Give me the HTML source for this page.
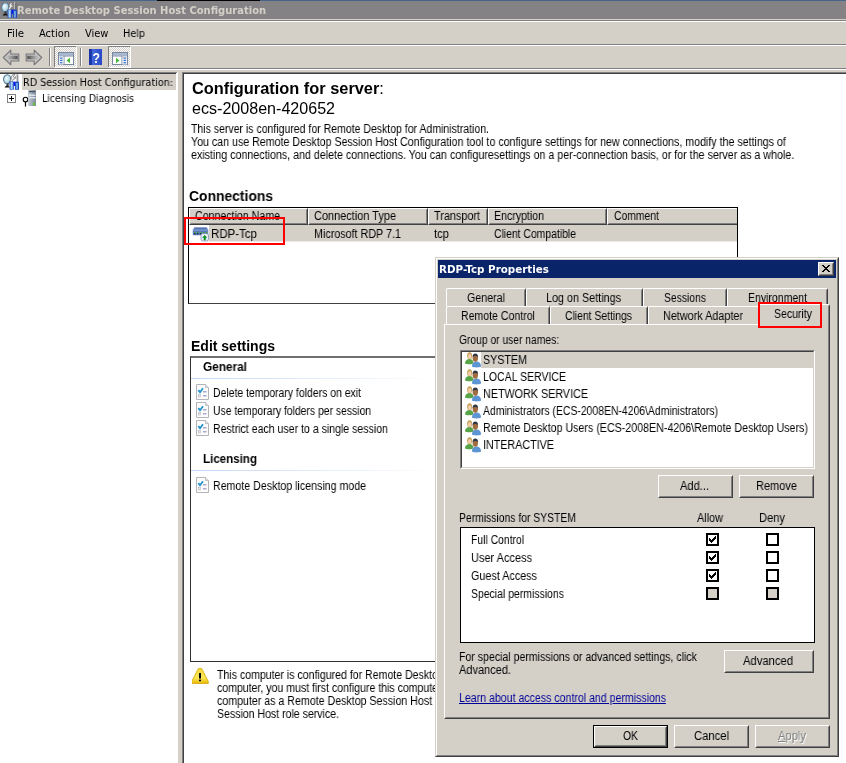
<!DOCTYPE html>
<html><head><meta charset="utf-8"><title>Remote Desktop Session Host Configuration</title>
<style>
html,body{margin:0;padding:0;}
body{width:846px;height:763px;overflow:hidden;background:#d4d0c8;position:relative;font-family:"Liberation Sans",sans-serif;font-size:11px;color:#000;}
.a{position:absolute;}
.t{position:absolute;white-space:nowrap;line-height:13px;font-size:12px;transform-origin:0 0;will-change:transform;}
.th{font-family:"DejaVu Sans Condensed","DejaVu Sans","Liberation Sans",sans-serif;font-size:11px;}
.b{font-weight:bold;}
.h13{font-size:14px;line-height:15px;font-weight:bold;}
.h16{font-size:16px;line-height:18px;}
.btn{position:absolute;box-sizing:border-box;border:1px solid;border-color:#fff #404040 #404040 #fff;background:#d4d0c8;}
.btn>i{position:absolute;left:0;top:0;right:0;bottom:0;border:1px solid;border-color:#d4d0c8 #808080 #808080 #d4d0c8;display:block;}
.sunk{position:absolute;box-sizing:border-box;border:1px solid;border-color:#808080 #fff #fff #808080;background:#fff;}
.sunk>i{position:absolute;left:0;top:0;right:0;bottom:0;border:1px solid;border-color:#404040 #d4d0c8 #d4d0c8 #404040;display:block;}
.hd{position:absolute;box-sizing:border-box;top:208px;height:17px;background:#d4d0c8;border:1px solid;border-color:#fff #404040 #404040 #fff;}
.hd>i{position:absolute;left:0;top:0;right:0;bottom:0;border:1px solid;border-color:#d4d0c8 #808080 #808080 #d4d0c8;display:block;}
.tab{position:absolute;box-sizing:border-box;height:18px;background:#d4d0c8;border-top:1px solid #fff;border-left:1px solid #fff;border-right:1px solid #404040;border-radius:2px 2px 0 0;}
.tab>i{position:absolute;right:0;top:1px;bottom:0;width:1px;background:#808080;display:block;}
.cb{position:absolute;box-sizing:border-box;width:13px;height:13px;border:2px solid #000;background:#fff;}
.cb.d{background:#d4d0c8;}
.red{position:absolute;box-sizing:border-box;border:2px solid #ff0000;}
</style></head><body>
<!-- main window title -->
<div class="a" style="left:0;top:0;width:846px;height:1px;background:#46658a"></div>
<div class="a" style="left:157px;top:0;width:103px;height:1px;background:#000"></div>
<div class="a" style="left:0;top:1px;width:846px;height:18px;background:#848284"></div>
<div class="a" style="left:0;top:20px;width:846px;height:1px;background:#808080"></div>
<div class="a" style="left:0;top:21px;width:846px;height:1px;background:#fff"></div>
<!-- menu / toolbar dividers -->
<div class="a" style="left:0;top:44px;width:846px;height:1px;background:#808080"></div>
<div class="a" style="left:0;top:45px;width:846px;height:1px;background:#fff"></div>
<div class="a" style="left:0;top:68px;width:846px;height:1px;background:#808080"></div>
<div class="a" style="left:0;top:69px;width:846px;height:1px;background:#fff"></div>
<!-- left tree -->
<div class="a" style="left:0;top:72px;width:177px;height:691px;background:#fff"></div>
<div class="a" style="left:0;top:72px;width:177px;height:1px;background:#808080"></div>
<div class="a" style="left:0;top:73px;width:176px;height:1px;background:#404040"></div>
<div class="a" style="left:177px;top:72px;width:1px;height:691px;background:#fff"></div>
<div class="a" style="left:22px;top:74px;width:154px;height:16px;background:#d4d0c8"></div>
<!-- right pane -->
<div class="a" style="left:182px;top:72px;width:664px;height:691px;background:#fff"></div>
<div class="a" style="left:182px;top:72px;width:664px;height:1px;background:#808080"></div>
<div class="a" style="left:182px;top:72px;width:1px;height:691px;background:#808080"></div>
<div class="a" style="left:183px;top:73px;width:663px;height:1px;background:#404040"></div>
<div class="a" style="left:183px;top:73px;width:1px;height:690px;background:#404040"></div>
<!-- connections list -->
<div class="a" style="left:188px;top:207px;width:550px;height:97px;background:#fff;box-sizing:border-box;border:1px solid #000;border-bottom-color:#404040"></div>
<div class="hd" style="left:189px;width:119px"><i></i></div>
<div class="hd" style="left:308px;width:120px"><i></i></div>
<div class="hd" style="left:428px;width:60px"><i></i></div>
<div class="hd" style="left:488px;width:119px"><i></i></div>
<div class="hd" style="left:607px;width:130px;border-right:0"><i style="border-right:0"></i></div>
<div class="a" style="left:209px;top:225px;width:528px;height:16px;background:#d4d0c8"></div>
<div class="a" style="left:209px;top:241px;width:528px;height:1px;background:#ebe9e5"></div>
<!-- edit settings box -->
<div class="a" style="left:190px;top:356px;width:600px;height:306px;box-sizing:border-box;border:1px solid #303030;border-top:2px solid #707070;background:#fff"></div>
<div class="a" style="left:191px;top:378px;width:246px;height:1px;background:linear-gradient(to right,#c3d7f6,#fff)"></div>
<div class="a" style="left:191px;top:470px;width:246px;height:1px;background:linear-gradient(to right,#c3d7f6,#fff)"></div>

<!-- icons: main window -->
<svg class="a" style="left:0;top:0" width="0" height="0"><defs>
<linearGradient id="gh" x1="0" x2="1" y1="0" y2="0"><stop offset="0" stop-color="#1038b8"/><stop offset=".35" stop-color="#b8dcf4"/><stop offset=".6" stop-color="#78b0e4"/><stop offset="1" stop-color="#1840c0"/></linearGradient>
<radialGradient id="gg" cx=".4" cy=".4" r=".7"><stop offset="0" stop-color="#f4fcff"/><stop offset=".6" stop-color="#b8dce8"/><stop offset="1" stop-color="#6890a8"/></radialGradient>
<linearGradient id="ga" x1="0" x2="1" y1="0" y2="0"><stop offset="0" stop-color="#c2c2c2"/><stop offset=".5" stop-color="#8c8c8c"/><stop offset="1" stop-color="#505050"/></linearGradient>
<linearGradient id="gb" x1="1" x2="0" y1="0" y2="0"><stop offset="0" stop-color="#c2c2c2"/><stop offset=".5" stop-color="#8c8c8c"/><stop offset="1" stop-color="#505050"/></linearGradient>
<linearGradient id="gs" x1="0" x2="1" y1="0" y2="0"><stop offset="0" stop-color="#c4ccd4"/><stop offset="1" stop-color="#7c8894"/></linearGradient>
<linearGradient id="gq" x1="0" x2="1" y1="0" y2="0"><stop offset="0" stop-color="#1830a0"/><stop offset=".22" stop-color="#1c3cb0"/><stop offset=".25" stop-color="#4468d8"/><stop offset="1" stop-color="#2848c8"/></linearGradient>
<linearGradient id="gw" x1="0" x2="0" y1="0" y2="1"><stop offset="0" stop-color="#f8d838"/><stop offset=".6" stop-color="#fce858"/><stop offset="1" stop-color="#e8b808"/></linearGradient>
<pattern id="chk" width="2" height="2" patternUnits="userSpaceOnUse"><rect width="2" height="2" fill="#fff"/><rect width="1" height="1" fill="#d4d0c8"/><rect x="1" y="1" width="1" height="1" fill="#d4d0c8"/></pattern>
<g id="tools">
<ellipse cx="4.200" cy="5.300" rx="3.600" ry="4.500" fill="url(#gg)" stroke="#5c7890" stroke-width="1.100"/>
<path d="M3.500 9.500h2.200v3h-2.200z" fill="#384048"/><path d="M1.800 12.800l2-1.200 3 1.200v.8h-5z" fill="#101010"/>
<path d="M11.800.4l-2.200.4-1.600 2.300.5 1.400-1.700 3 1.800 1 1.900-3.300 1.500-.3 1.200-2.300-1.700 1-1-.7z" fill="#ececec" stroke="#6c6c6c" stroke-width=".7"/>
<path d="M13.200 0h1.300v7.500h-1.300z" fill="#c8c8c8"/><path d="M14.500.5h.7v7h-.7z" fill="#404040"/>
<rect x="6.600" y="7.400" width="4.200" height="8.600" rx=".8" fill="#1840c0"/><rect x="7.500" y="7.800" width="2.200" height="7.800" fill="#b4dcf4"/><rect x="8.800" y="7.800" width="1" height="7.800" fill="#7cb4e8"/>
<rect x="12" y="7.400" width="4" height="8.600" rx=".8" fill="#2048c4"/><rect x="12.900" y="9" width="2" height="6.600" fill="#6ca4e0"/>
<rect x="10.700" y="7.600" width="1.400" height="4.400" fill="#0818f0"/>
</g>
<g id="doc">
<path d="M.5.500h9l3 3v12h-12z" fill="#fdfcfd" stroke="#b4b4b8"/><path d="M9.500.5v3h3" fill="#e8e8ec" stroke="#b4b4b8" stroke-width=".8"/>
<path d="M2.300 6.200l1.700 2 3-4" fill="none" stroke="#2394cc" stroke-width="1.800"/>
<rect x="7" y="7" width="3.500" height="1.500" fill="#a9a9d2"/><rect x="7" y="11" width="3.500" height="1.500" fill="#a9a9d2"/>
<rect x="2.500" y="10.500" width="2" height="2.500" fill="#e4e4e8" stroke="#b8b8c0" stroke-width=".6"/>
</g>
</defs></svg>
<svg class="a" style="left:1px;top:2px" width="16" height="16" viewBox="0 0 16 16"><use href="#tools"/></svg>
<svg class="a" style="left:3px;top:74px" width="16" height="16" viewBox="0 0 16 16"><use href="#tools"/></svg>
<!-- toolbar -->
<svg class="a" style="left:0;top:46px;will-change:transform" width="140" height="22" viewBox="0 0 140 22">
<path d="M3.300 11.500l7.500-7.300v3.800h8v7h-8v3.800z" fill="#c2c2c2" stroke="#767676" stroke-width="1.100" stroke-linejoin="round"/>
<rect x="7" y="9.700" width="10.700" height="3.600" fill="url(#ga)"/>
<path d="M41.700 11.500l-7.500-7.300v3.800h-8v7h8v3.800z" fill="#c2c2c2" stroke="#767676" stroke-width="1.100" stroke-linejoin="round"/>
<rect x="27.300" y="9.700" width="10.700" height="3.600" fill="url(#gb)"/>
<rect x="49" y="2" width="1" height="18" fill="#808080"/><rect x="50" y="2" width="1" height="18" fill="#fff"/>
<rect x="80" y="2" width="1" height="18" fill="#808080"/><rect x="81" y="2" width="1" height="18" fill="#fff"/>
<rect x="54" y="0" width="23" height="22" fill="url(#chk)"/><path d="M54.500 21.500v-21h22" fill="none" stroke="#808080"/><path d="M54.500 21.500h22v-21" fill="none" stroke="#fff"/>
<rect x="108" y="0" width="23" height="22" fill="url(#chk)"/><path d="M108.500 21.500v-21h22" fill="none" stroke="#808080"/><path d="M108.500 21.500h22v-21" fill="none" stroke="#fff"/>
<g transform="translate(58,6)"><rect x=".5" y=".5" width="15" height="12" fill="#fff" stroke="#7888a0"/><rect x="1" y="1" width="14" height="2.500" fill="#a8b8d0"/><rect x="1" y="3.500" width="14" height="1" fill="#7888a0"/><rect x="5.500" y="4" width="1" height="8.500" fill="#7888a0"/><rect x="1" y="4.500" width="4.500" height="8" fill="#e8ecf4"/>
<rect x="2" y="5.500" width="2.500" height="1.200" fill="#3878d0"/><rect x="2" y="7.800" width="2.500" height="1.200" fill="#3878d0"/><rect x="2" y="10.100" width="2.500" height="1.200" fill="#3878d0"/>
<path d="M8.500 8.500l3.500-2.800v5.600z" fill="#48b838"/></g>
<g transform="translate(112,6)"><rect x=".5" y=".5" width="15" height="12" fill="#fff" stroke="#7888a0"/><rect x="1" y="1" width="14" height="2.500" fill="#a8b8d0"/><rect x="1" y="3.500" width="14" height="1" fill="#7888a0"/><rect x="9.500" y="4" width="1" height="8.500" fill="#7888a0"/><rect x="10.500" y="4.500" width="4.500" height="8" fill="#e8ecf4"/>
<rect x="11.500" y="5.500" width="2.500" height="1.200" fill="#3878d0"/><rect x="11.500" y="7.800" width="2.500" height="1.200" fill="#3878d0"/><rect x="11.500" y="10.100" width="2.500" height="1.200" fill="#3878d0"/>
<path d="M7.500 8.500l-3.500-2.800v5.600z" fill="#48b838"/></g>
<rect x="89" y="3" width="13" height="16" fill="url(#gq)"/>
<text transform="translate(96.300,16.500) scale(.82,1)" font-family="Liberation Sans,sans-serif" font-size="15" font-weight="bold" fill="#fff" text-anchor="middle">?</text>
</svg>
<!-- tree plus, key, server -->
<svg class="a" style="left:7px;top:90px" width="30" height="17" viewBox="0 0 30 17">
<rect x=".5" y="4.500" width="8" height="8" fill="#fff" stroke="#808080"/><path d="M2 8.500h5M4.500 6v5" stroke="#000" fill="none"/>
<circle cx="18.500" cy="9.500" r="2.300" fill="#fff" stroke="#000" stroke-width="1.100"/><path d="M18.500 12v4.500" stroke="#000" stroke-width="1.200"/>
<rect x="21" y="0" width="8" height="16" fill="url(#gs)"/><rect x="22" y="1" width="6" height="1.200" fill="#405060"/><rect x="21.500" y="4.500" width="7" height="1.500" fill="#dce4ec"/><rect x="21.500" y="7" width="7" height="1.500" fill="#dce4ec"/><rect x="26" y="13" width="2" height="2" fill="#58d028"/>
</svg>
<!-- connection row icon -->
<svg class="a" style="left:192px;top:226px" width="17" height="16" viewBox="0 0 17 16">
<path d="M2.500 1.500h12l1.500 2.500v5h-15v-5z" fill="#5878b8" stroke="#7890c8" stroke-width=".6"/><rect x="1.200" y="3.600" width="14.600" height="1" fill="#88a4d8"/>
<rect x="2" y="6" width="1.500" height="1" fill="#48b038"/><rect x="5" y="6" width="1.500" height="1" fill="#48b038"/><rect x="8" y="6" width="1.500" height="1" fill="#48b038"/><rect x="11" y="6" width="1.500" height="1" fill="#48b038"/><rect x="14" y="6" width="1.500" height="1" fill="#48b038"/>
<rect x="2" y="7" width="1.500" height="1.500" fill="#203058"/><rect x="5" y="7" width="1.500" height="1.500" fill="#203058"/><rect x="8" y="7" width="1.500" height="1.500" fill="#203058"/><rect x="11" y="7" width="1.500" height="1.500" fill="#203058"/><rect x="14" y="7" width="1.500" height="1.500" fill="#203058"/>
<rect x="9" y="7.500" width="7.500" height="7.500" rx="1.800" fill="#e8ecf8" stroke="#8090b8" stroke-width=".8"/>
<path d="M12.700 9l2.500 2.800h-1.500v2.400h-2v-2.400h-1.500z" fill="#089020"/>
</svg>
<!-- checklist icons -->
<svg class="a" style="left:196px;top:384px" width="13" height="16" viewBox="0 0 13 16"><use href="#doc"/></svg>
<svg class="a" style="left:196px;top:402px" width="13" height="16" viewBox="0 0 13 16"><use href="#doc"/></svg>
<svg class="a" style="left:196px;top:420px" width="13" height="16" viewBox="0 0 13 16"><use href="#doc"/></svg>
<svg class="a" style="left:196px;top:477px" width="13" height="16" viewBox="0 0 13 16"><use href="#doc"/></svg>
<!-- warning -->
<svg class="a" style="left:192px;top:668px" width="17" height="16" viewBox="0 0 17 16">
<path d="M6.300.5h3.400l6.600 13v2h-16.600v-2z" fill="url(#gw)" stroke="#d4a808" stroke-width=".8"/>
<path d="M7 5h2v5.500h-2z" fill="#000"/><rect x="7" y="11.500" width="2" height="1.800" rx=".6" fill="#000"/>
</svg>

<div class="t th b" style="left:17px;top:4px;color:#d4d0c8;transform:scaleX(1.007)">Remote Desktop Session Host Configuration</div>
<div class="t th" style="left:7px;top:27px;transform:scaleX(1.031)">File</div>
<div class="t th" style="left:39px;top:27px;">Action</div>
<div class="t th" style="left:85px;top:27px;transform:scaleX(0.980)">View</div>
<div class="t th" style="left:123px;top:27px;transform:scaleX(0.974)">Help</div>
<div class="t th" style="left:23px;top:76px;transform:scaleX(0.970)">RD Session Host Configuration:</div>
<div class="t th" style="left:42px;top:92px;transform:scaleX(0.941)">Licensing Diagnosis</div>
<div class="t h16" style="left:192px;top:80px;transform:scaleX(1.023)"><b>Configuration for server</b>:</div>
<div class="t h16" style="left:192px;top:100px;transform:scaleX(1.005)">ecs-2008en-420652</div>
<div class="t" style="left:191px;top:123px;transform:scaleX(0.876)">This server is configured for Remote Desktop for Administration.</div>
<div class="t" style="left:191px;top:136px;transform:scaleX(0.887)">You can use Remote Desktop Session Host Configuration tool to configure settings for new connections, modify the settings of</div>
<div class="t" style="left:191px;top:149px;transform:scaleX(0.890)">existing connections, and delete connections. You can configuresettings on a per-connection basis, or for the server as a whole.</div>
<div class="t h13" style="left:189px;top:189px;transform:scaleX(0.991)">Connections</div>
<div class="t" style="left:195px;top:210px;transform:scaleX(0.885)">Connection Name</div>
<div class="t" style="left:314px;top:210px;transform:scaleX(0.913)">Connection Type</div>
<div class="t" style="left:434px;top:210px;transform:scaleX(0.904)">Transport</div>
<div class="t" style="left:494px;top:210px;transform:scaleX(0.882)">Encryption</div>
<div class="t" style="left:614px;top:210px;transform:scaleX(0.865)">Comment</div>
<div class="t" style="left:211px;top:228px;transform:scaleX(0.958)">RDP-Tcp</div>
<div class="t" style="left:314px;top:228px;transform:scaleX(0.895)">Microsoft RDP 7.1</div>
<div class="t" style="left:434px;top:228px;transform:scaleX(0.937)">tcp</div>
<div class="t" style="left:494px;top:228px;transform:scaleX(0.866)">Client Compatible</div>
<div class="t h13" style="left:191px;top:339px;">Edit settings</div>
<div class="t b" style="left:203px;top:361px;transform:scaleX(0.984)">General</div>
<div class="t" style="left:213px;top:387px;transform:scaleX(0.870)">Delete temporary folders on exit</div>
<div class="t" style="left:213px;top:405px;transform:scaleX(0.865)">Use temporary folders per session</div>
<div class="t" style="left:213px;top:423px;transform:scaleX(0.880)">Restrict each user to a single session</div>
<div class="t b" style="left:203px;top:453px;transform:scaleX(0.964)">Licensing</div>
<div class="t" style="left:213px;top:480px;transform:scaleX(0.886)">Remote Desktop licensing mode</div>
<div class="t" style="left:217px;top:669px;transform:scaleX(0.881)">This computer is configured for Remote Deskto</div>
<div class="t" style="left:217px;top:682px;transform:scaleX(0.879)">computer, you must first configure this compute</div>
<div class="t" style="left:217px;top:695px;transform:scaleX(0.886)">computer as a Remote Desktop Session Host</div>
<div class="t" style="left:217px;top:708px;transform:scaleX(0.879)">Session Host role service.</div>
<!-- ===== dialog ===== -->
<div class="a" id="dlg" style="left:435px;top:257px;width:404px;height:500px;background:#d4d0c8;box-sizing:border-box;border:1px solid;border-color:#d4d0c8 #404040 #404040 #d4d0c8"></div>
<div class="a" style="left:436px;top:258px;width:402px;height:498px;box-sizing:border-box;border:1px solid;border-color:#fff #808080 #808080 #fff"></div>
<div class="a" style="left:438px;top:260px;width:398px;height:18px;background:#0a246a"></div>
<!-- close button -->
<div class="btn" style="left:818px;top:262px;width:16px;height:14px"><i></i>
<svg class="a" style="left:3px;top:2px" width="8" height="7" viewBox="0 0 8 7"><path d="M0 0h2v1h1v1h2v-1h1v-1h2v1h-1v1h-1v1h-1v1h1v1h1v1h1v1h-2v-1h-1v-1h-2v1h-1v1h-2v-1h1v-1h1v-1h1v-1h-1v-1h-1v-1h-1z" fill="#000"/></svg></div>
<!-- tab page -->
<div class="a" style="left:444px;top:324px;width:386px;height:395px;box-sizing:border-box;border:1px solid;border-color:#fff #404040 #404040 #fff"></div>
<div class="a" style="left:445px;top:325px;width:384px;height:393px;box-sizing:border-box;border:1px solid;border-color:#d4d0c8 #808080 #808080 #d4d0c8"></div>
<!-- tabs row 1 -->
<div class="tab" style="left:446px;top:288px;width:80px"><i></i></div>
<div class="tab" style="left:526px;top:288px;width:117px"><i></i></div>
<div class="tab" style="left:643px;top:288px;width:84px"><i></i></div>
<div class="tab" style="left:727px;top:288px;width:101px"><i></i></div>
<!-- tabs row 2 -->
<div class="tab" style="left:446px;top:306px;width:104px;height:18px"><i></i></div>
<div class="tab" style="left:550px;top:306px;width:98px;height:18px"><i></i></div>
<div class="tab" style="left:648px;top:306px;width:112px;height:18px"><i></i></div>
<div class="tab" style="left:758px;top:304px;width:72px;height:22px"><i></i></div>
<!-- user list -->
<div class="sunk" style="left:460px;top:350px;width:355px;height:119px"><i></i></div>
<div class="a" style="left:481px;top:352px;width:332px;height:16px;background:#d4d0c8"></div>
<!-- buttons -->
<div class="btn" style="left:658px;top:475px;width:75px;height:23px"><i></i></div>
<div class="btn" style="left:739px;top:475px;width:75px;height:23px"><i></i></div>
<div class="btn" style="left:724px;top:650px;width:90px;height:23px"><i></i></div>
<div class="a" style="left:593px;top:725px;width:75px;height:23px;background:#000"></div>
<div class="btn" style="left:594px;top:726px;width:73px;height:21px"><i></i></div>
<div class="btn" style="left:674px;top:725px;width:75px;height:23px"><i></i></div>
<div class="btn" style="left:755px;top:725px;width:75px;height:23px"><i></i></div>
<!-- perm list -->
<div class="a" style="left:460px;top:527px;width:355px;height:116px;box-sizing:border-box;border:1px solid #000;background:#fff"></div>
<div class="cb" style="left:706px;top:533px"></div><div class="cb" style="left:766px;top:533px"></div>
<div class="cb" style="left:706px;top:551px"></div><div class="cb" style="left:766px;top:551px"></div>
<div class="cb" style="left:706px;top:569px"></div><div class="cb" style="left:766px;top:569px"></div>
<div class="cb d" style="left:706px;top:587px"></div><div class="cb d" style="left:766px;top:587px"></div>
<svg class="a" style="left:709px;top:536px" width="7" height="7" viewBox="0 0 7 7"><path d="M0 2h1v1h1v1h1v-1h1v-1h1v-1h1v-1h1v3h-1v1h-1v1h-1v1h-1v1h-1v-1h-1v-1h-1z" fill="#000"/></svg>
<svg class="a" style="left:709px;top:554px" width="7" height="7" viewBox="0 0 7 7"><path d="M0 2h1v1h1v1h1v-1h1v-1h1v-1h1v-1h1v3h-1v1h-1v1h-1v1h-1v1h-1v-1h-1v-1h-1z" fill="#000"/></svg>
<svg class="a" style="left:709px;top:572px" width="7" height="7" viewBox="0 0 7 7"><path d="M0 2h1v1h1v1h1v-1h1v-1h1v-1h1v-1h1v3h-1v1h-1v1h-1v1h-1v1h-1v-1h-1v-1h-1z" fill="#000"/></svg>
<!-- user icons -->
<svg class="a" style="left:0;top:0" width="0" height="0"><defs>
<g id="usr">
<path d="M0 11.500c0-3 2-4.500 4.500-4.500s4 1.500 4 4.500c-1.500 1-7 1-8.500 0z" fill="#58a448"/>
<ellipse cx="4.600" cy="3.700" rx="2.500" ry="3.500" fill="#c8a058"/><ellipse cx="4.700" cy="4.500" rx="1.700" ry="2.500" fill="#f0d0b0"/>
<path d="M7 14.500c0-3.500 2-5 4.500-5s4.500 1.500 4.500 5c-2 1.200-7 1.200-9 0z" fill="#5c94d4"/>
<ellipse cx="10.300" cy="5.800" rx="2.700" ry="3.900" fill="#a06c40"/><path d="M7.600 5c0-2.500 1.200-3.600 2.700-3.600s2.700 1.100 2.700 3.600c-1.500-1.500-3.900-1.500-5.400 0z" fill="#303848"/>
</g></defs></svg>
<svg class="a" style="left:465px;top:352px" width="16" height="16" viewBox="0 0 16 16"><use href="#usr"/></svg>
<svg class="a" style="left:465px;top:369px" width="16" height="16" viewBox="0 0 16 16"><use href="#usr"/></svg>
<svg class="a" style="left:465px;top:386px" width="16" height="16" viewBox="0 0 16 16"><use href="#usr"/></svg>
<svg class="a" style="left:465px;top:403px" width="16" height="16" viewBox="0 0 16 16"><use href="#usr"/></svg>
<svg class="a" style="left:465px;top:420px" width="16" height="16" viewBox="0 0 16 16"><use href="#usr"/></svg>
<svg class="a" style="left:465px;top:437px" width="16" height="16" viewBox="0 0 16 16"><use href="#usr"/></svg>

<div class="t th b" style="left:439px;top:263px;color:#fff;transform:scaleX(1.043)">RDP-Tcp Properties</div>
<div class="t" style="left:467px;top:292px;transform:scaleX(0.890)">General</div>
<div class="t" style="left:546px;top:292px;transform:scaleX(0.899)">Log on Settings</div>
<div class="t" style="left:664px;top:292px;transform:scaleX(0.862)">Sessions</div>
<div class="t" style="left:748px;top:292px;transform:scaleX(0.876)">Environment</div>
<div class="t" style="left:461px;top:310px;transform:scaleX(0.880)">Remote Control</div>
<div class="t" style="left:565px;top:310px;transform:scaleX(0.866)">Client Settings</div>
<div class="t" style="left:663px;top:310px;transform:scaleX(0.902)">Network Adapter</div>
<div class="t" style="left:774px;top:308px;transform:scaleX(0.876)">Security</div>
<div class="t" style="left:459px;top:334px;transform:scaleX(0.857)">Group or user names:</div>
<div class="t" style="left:483px;top:354px;transform:scaleX(0.892)">SYSTEM</div>
<div class="t" style="left:483px;top:371px;transform:scaleX(0.876)">LOCAL SERVICE</div>
<div class="t" style="left:483px;top:388px;transform:scaleX(0.896)">NETWORK SERVICE</div>
<div class="t" style="left:483px;top:405px;transform:scaleX(0.868)">Administrators (ECS-2008EN-4206\Administrators)</div>
<div class="t" style="left:483px;top:422px;transform:scaleX(0.889)">Remote Desktop Users (ECS-2008EN-4206\Remote Desktop Users)</div>
<div class="t" style="left:483px;top:439px;transform:scaleX(0.895)">INTERACTIVE</div>
<div class="t" style="left:680px;top:480px;transform:scaleX(0.925)">Add...</div>
<div class="t" style="left:756px;top:480px;transform:scaleX(0.917)">Remove</div>
<div class="t" style="left:459px;top:512px;transform:scaleX(0.864)">Permissions for SYSTEM</div>
<div class="t" style="left:697px;top:512px;transform:scaleX(0.906)">Allow</div>
<div class="t" style="left:759px;top:512px;transform:scaleX(0.928)">Deny</div>
<div class="t" style="left:471px;top:534px;transform:scaleX(0.864)">Full Control</div>
<div class="t" style="left:471px;top:552px;transform:scaleX(0.915)">User Access</div>
<div class="t" style="left:471px;top:570px;transform:scaleX(0.899)">Guest Access</div>
<div class="t" style="left:471px;top:588px;transform:scaleX(0.871)">Special permissions</div>
<div class="t" style="left:459px;top:651px;transform:scaleX(0.881)">For special permissions or advanced settings, click</div>
<div class="t" style="left:459px;top:664px;transform:scaleX(0.917)">Advanced.</div>
<div class="t" style="left:743px;top:655px;transform:scaleX(0.937)">Advanced</div>
<div class="t" style="left:459px;top:692px;color:#000098;text-decoration:underline;transform:scaleX(0.882)">Learn about access control and permissions</div>
<div class="t" style="left:623px;top:730px;transform:scaleX(0.865)">OK</div>
<div class="t" style="left:694px;top:730px;transform:scaleX(0.937)">Cancel</div>
<div class="t" style="left:778px;top:730px;color:#808080;text-shadow:1px 1px 0 #fff;transform:scaleX(0.932)"><u>A</u>pply</div>
<div class="red" style="left:184px;top:217px;width:101px;height:28px"></div>
<div class="red" style="left:758px;top:302px;width:64px;height:26px"></div>
</body></html>
